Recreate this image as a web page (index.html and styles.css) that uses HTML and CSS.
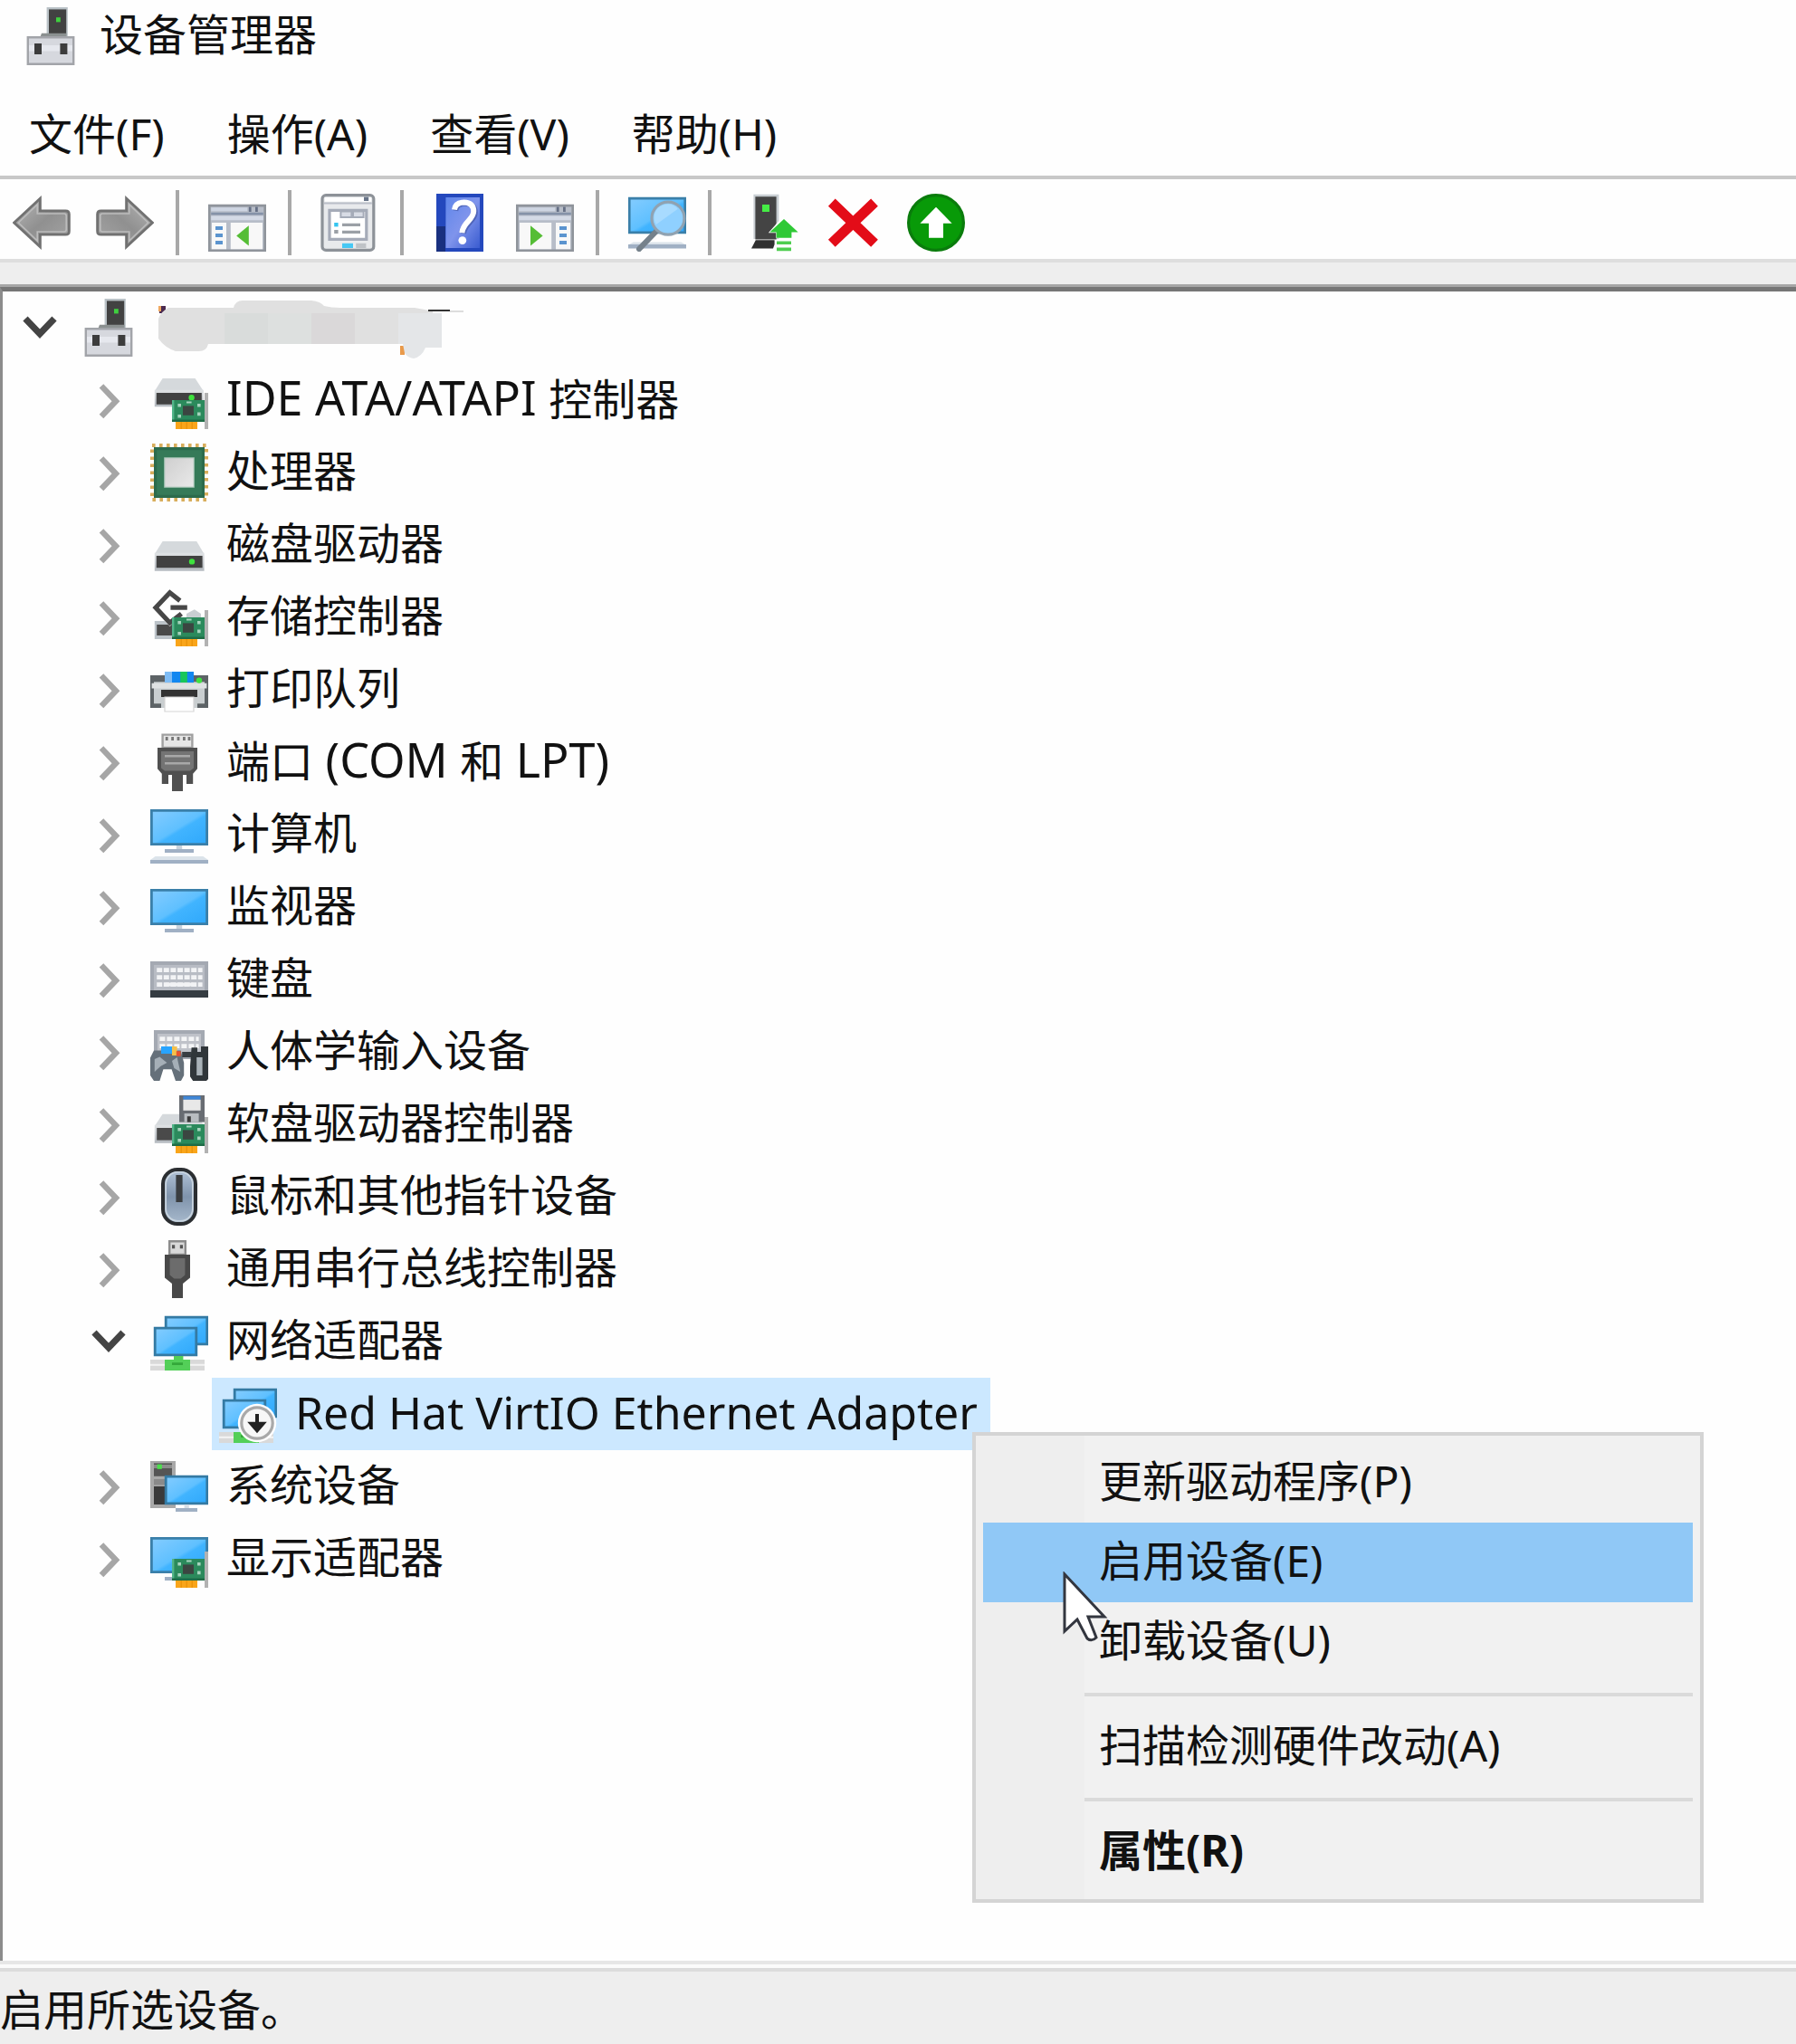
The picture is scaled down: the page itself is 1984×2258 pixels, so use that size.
FILE: index.html
```html
<!DOCTYPE html>
<html lang="zh-CN">
<head>
<meta charset="utf-8">
<title>设备管理器</title>
<link rel="stylesheet" href="styles.css">
</head>
<body>
<svg class="defs" width="0" height="0" aria-hidden="true">
  <defs>
    <linearGradient id="g-screen" x1="0" y1="0" x2="1" y2="1">
      <stop offset="0" stop-color="#84ccff"/><stop offset=".5" stop-color="#5fc0ff"/><stop offset=".56" stop-color="#41b4ff"/><stop offset="1" stop-color="#2fa8fb"/>
    </linearGradient>
    <linearGradient id="g-metal" x1="0" y1="0" x2="0" y2="1">
      <stop offset="0" stop-color="#dfe2e4"/><stop offset="1" stop-color="#b4b9bf"/>
    </linearGradient>
    <linearGradient id="g-arrow" x1="0" y1="0" x2="1" y2="1">
      <stop offset="0" stop-color="#b8b8b8"/><stop offset=".5" stop-color="#909090"/><stop offset="1" stop-color="#a6a6a6"/>
    </linearGradient>
    <linearGradient id="g-mouse" x1="0" y1="0" x2="0" y2="1">
      <stop offset="0" stop-color="#b3c4d8"/><stop offset=".5" stop-color="#7f93ab"/><stop offset="1" stop-color="#a9bbce"/>
    </linearGradient>
    <linearGradient id="g-help" x1="0" y1="0" x2="1" y2="1">
      <stop offset="0" stop-color="#5f86ea"/><stop offset=".5" stop-color="#7f94ec"/><stop offset="1" stop-color="#3a5cd0"/>
    </linearGradient>
    <linearGradient id="g-chip" x1="0" y1="0" x2="1" y2="1">
      <stop offset="0" stop-color="#cfcfcf"/><stop offset="1" stop-color="#e9e9e9"/>
    </linearGradient>

    <symbol id="i-manager" viewBox="0 0 16 16">
      <path d="M6.4 0h5.8v8H6.4z" fill="#b9c1c6"/><path d="M7 .6h4.8V8H7z" fill="#424242"/>
      <path d="M9 2.8h1.2v1.3H9z" fill="#3fd03f"/><path d="M5 7.2h6.8v1H4.6z" fill="#8b9090"/>
      <path d="M1.2 8.3h12.6v7.4H1.2z" fill="#d6d8de" stroke="#a2a4a9" stroke-width=".6"/>
      <path d="M1.5 10.5h12v1.6h-12z" fill="#e6e8ee"/>
      <path d="M3 10h2v3H3zM10.1 10h2v3h-2z" fill="#3c3c3c"/>
    </symbol>
    <symbol id="p-card" viewBox="0 0 16 16">
      <path d="M15 6h1v10h-1z" fill="#b2b2b2"/>
      <path d="M6 8h9v6H6z" fill="#2b8a5c"/><path d="M6 8h.6v6H6z" fill="#52b58a"/><path d="M6 13.4h9v.6H6z" fill="#1f6c46"/>
      <path d="M9 9.6h3v2.6H9z" fill="#3b4641"/>
      <path d="M7.6 9h.9v.9h-.9zM7.6 12h.9v.9h-.9zM13 9h.9v.9H13zM13 11.4h.9v.9H13zM10 8.4h1.4v.5H10z" fill="#a6d3bd"/>
      <path d="M7 14h6v2H7z" fill="#f9a51a"/><path d="M8.4 14h.3v2h-.3zM9.9 14h.3v2h-.3zM11.4 14h.3v2h-.3z" fill="#e89208"/>
    </symbol>
    <symbol id="p-drive" viewBox="0 0 16 16">
      <path d="M3.4 7h9.4l2 3.4H1.3z" fill="#d5d9dc"/>
      <path d="M1.2 10.2h13.7v5H1.2z" fill="url(#g-metal)"/>
      <path d="M1.7 11h12.7v3.3H1.7z" fill="#414141"/>
      <circle cx="11.5" cy="12.6" r=".8" fill="#3ee23e"/>
    </symbol>
    <symbol id="i-ide" viewBox="0 0 16 16">
      <path d="M3.4 2h9l2.2 3.4H1.3z" fill="#d5d9dc"/><path d="M1.2 5.2h13.5v4.6H1.2z" fill="url(#g-metal)"/>
      <path d="M1.7 6h12.5v3.2H1.7z" fill="#414141"/><circle cx="11.4" cy="7.3" r=".8" fill="#3ee23e"/>
      <use href="#p-card"/>
    </symbol>
    <symbol id="i-cpu" viewBox="0 0 16 16">
      <rect x=".5" y=".5" width="15" height="15" fill="none" stroke="#d8ae5c" stroke-width="1" stroke-dasharray=".9 1.1"/>
      <path d="M1 1h14v14H1z" fill="#2c6b4c"/><path d="M1.8 1.8h12.4v12.4H1.8z" fill="#357a58"/>
      <path d="M3.8 3.8h8.4v8.4H3.8z" fill="#fff" opacity=".6"/><path d="M4.1 4.1h7.8v7.8H4.1z" fill="url(#g-chip)"/>
    </symbol>
    <symbol id="i-disk" viewBox="0 0 16 16"><use href="#p-drive"/></symbol>
    <symbol id="i-storage" viewBox="0 0 16 16">
      <path d="M1.2 9h8v5H1.2z" fill="#bcc3c9"/><path d="M1.8 10h6v3h-6z" fill="#4a4a4a"/>
      <path d="M10 7l2.2-1.2L14 7v2h-4z" fill="#c9ced2"/>
      <path d="M5.4 .6L10.5 5.5 5.4 10.5.5 5.5z" fill="#fff"/>
      <path d="M8.2 3.4L5.4 1.2 1.5 5.3l3.900 4.200L8.600 7M5.600 5.300h4.600" fill="none" stroke="#474747" stroke-width="1.300"/>
      <use href="#p-card"/>
    </symbol>
    <symbol id="i-printer" viewBox="0 0 16 16">
      <path d="M0 4h16v9H0z" fill="#5d6366"/><path d="M1 5.8h14v6H1z" fill="#c9ced0"/><path d="M.4 6.2h15.2v1.4H.4z" fill="#dfe2e3"/>
      <path d="M4 3h8v3H4z" fill="#1187f0"/><path d="M4 3h2v3H4z" fill="#7ebcf5"/><path d="M8.3 3h1.9v3H8.3z" fill="#19c65a"/>
      <circle cx="13.5" cy="5.4" r=".8" fill="#3ee23e"/>
      <path d="M3 8h10v2.2H3z" fill="#333"/><path d="M3 10h10v3H3z" fill="#c9ced0"/><path d="M4 10h8v4H4z" fill="#fff" stroke="#d5d5d5" stroke-width=".3"/>
    </symbol>
    <symbol id="i-port" viewBox="0 0 16 16">
      <path d="M3.4 .4h8.2V4H3.4z" fill="#e6e6e6" stroke="#a0a0a0" stroke-width=".6"/>
      <path d="M4.2 1h.7v1h-.7zM5.8 1h.7v1h-.7zM7.4 1h.7v1h-.7zM9 1h.7v1H9zM10.4 1h.7v1h-.7z" fill="#777"/>
      <path d="M2 4h11v5.8l-1.2 1.4V14H10v-2.5H5V14H3.2v-2.8L2 9.8z" fill="#505050"/>
      <path d="M3 5h9v4.6l-1 .8H4l-1-.8z" fill="#747474"/>
      <path d="M4 6h7v.6H4zM4 8h7v.6H4z" fill="#a8a8a8"/><path d="M6 11.4h3V16H6z" fill="#505050"/>
    </symbol>
    <symbol id="i-computer" viewBox="0 0 16 16">
      <path d="M.35 1.35h15.3v9.3H.35z" fill="url(#g-screen)" stroke="#3a7fa9" stroke-width=".7"/>
      <path d="M7.2 11h1.6v1H7.2z" fill="#c8d2dc"/><path d="M4 12h8v1H4z" fill="#a0b0c4"/>
      <path d="M1.4 14h13.2l1.4 1H0z" fill="#dbe3ea"/><path d="M0 15h16v1H0z" fill="#a0b0c4"/>
    </symbol>
    <symbol id="i-monitor" viewBox="0 0 16 16">
      <path d="M.35 3.35h15.3v9.3H.35z" fill="url(#g-screen)" stroke="#3a7fa9" stroke-width=".7"/>
      <path d="M7.2 13h1.6v1H7.2z" fill="#c8d2dc"/><path d="M4 14h8v1H4z" fill="#a0b0c4"/>
    </symbol>
    <symbol id="i-keyboard" viewBox="0 0 16 16">
      <path d="M0 3h16v10H0z" fill="#a4a9b2"/><path d="M1 4h14v7H1z" fill="#b8bcc4"/>
      <path d="M1.8 5.4h12.6M1.8 7.4h12.6M1.8 9.4h12.6" stroke="#f2f3f5" stroke-width="1.2" stroke-dasharray="1.5 .4"/>
      <path d="M4.2 8.9h7.6v1H4.2z" fill="#f2f3f5"/>
      <path d="M0 11h16v2H0z" fill="#353c42"/>
    </symbol>
    <symbol id="i-hid" viewBox="0 0 16 16">
      <path d="M1 2h14v8H1z" fill="#a4a9b2"/><path d="M2 3h12v6H2z" fill="#bfc2c9"/>
      <path d="M2.6 4.4h10.8M2.6 6.4h10.8" stroke="#f4f5f6" stroke-width="1.2" stroke-dasharray="1.5 .5"/>
      <path d="M1 7.600h7.400l.9 3.400V14.500L8.500 16H7L5.900 12.800H3.600L2.600 16H1L0 14.500V9.600z" fill="#65707a"/>
      <path d="M1.200 13.500V10l1.400-.6 2 1.600-1.800 1zM6.600 12.500L6 10.500l1.400-1 .9 4z" fill="#a5afb7"/>
      <path d="M3 6.500h3v2H3z" fill="#28a4ff"/><path d="M6 6.500h1.400V9H6z" fill="#f5c04a"/><path d="M7.200 7.800h1.200v1.400H7.200z" fill="#e8532f"/>
      <path d="M8.800 8h2.600v1.500H8.800z" fill="#383e43"/>
      <path d="M11.400 6.800h1.600v1.200h1V6.500h2v9l-.5.500h-3.700l-.8-1.200V12z" fill="#30363a"/><path d="M12.800 9.500h1.600v5h-1.600z" fill="#a9b2b8"/>
    </symbol>
    <symbol id="i-floppy" viewBox="0 0 16 16">
      <path d="M3.400 5.200h9.400l2 3.200H1.300z" fill="#d5d9dc"/><path d="M1.200 8.200h9v5h-9z" fill="url(#g-metal)"/><path d="M1.800 9h6v3.400h-6z" fill="#4a4a4a"/>
      <path d="M8 0h7v7.400H8z" fill="#686c72"/><path d="M9.100 .2h4.800v1H9.100z" fill="#3f86d6"/><path d="M9.100 1.200h4.800v3H9.100z" fill="#e8e8e8"/>
      <path d="M9.400 5h4v2.400h-4z" fill="#b8bcc0"/><path d="M10.200 5.800h1v1.600h-1z" fill="#3a3a3a"/>
      <use href="#p-card"/>
    </symbol>
    <symbol id="i-mouse" viewBox="0 0 16 16">
      <rect x="3.500" y=".5" width="9" height="15" rx="4" fill="url(#g-mouse)" stroke="#2b2e31" stroke-width="1"/>
      <rect x="4.300" y="1.200" width="7.400" height="13.500" rx="3.400" fill="none" stroke="#cbd6e0" stroke-width=".4"/>
      <path d="M7.100 2h1.800v7.500H7.100z" fill="#3a3d40"/>
    </symbol>
    <symbol id="i-usb" viewBox="0 0 16 16">
      <path d="M5.300 .3h4.400V4H5.300z" fill="#d9d9d9" stroke="#8c8c8c" stroke-width=".6"/>
      <path d="M6 1.300h.8v1H6zM8.200 1.300H9v1h-.8z" fill="#555"/>
      <path d="M4 4h7v6.400L9 12v4H6v-4L4 10.400z" fill="#484848"/><path d="M5.400 5h4.200v4.600l-1.200 1H6.600l-1.200-1z" fill="#6c6c6c"/>
    </symbol>
    <symbol id="i-network" viewBox="0 0 16 16">
      <path d="M4.300 1.300h11.400v7.400H4.300z" fill="url(#g-screen)" stroke="#347aa3" stroke-width=".7"/>
      <path d="M1.300 4.300h11.400v7.400H1.300z" fill="url(#g-screen)" stroke="#347aa3" stroke-width=".7"/>
      <path d="M0 13h15v3H0z" fill="#d9d9d9"/><path d="M0 14.200h15v.5H0z" fill="#f4f4f4"/>
      <path d="M6.500 12h2.600v1H11v3H4v-3h2.500z" fill="#53cf58"/><path d="M6 13.800h3v.7H6z" fill="#34a83a"/>
    </symbol>
    <symbol id="i-disabled" viewBox="0 0 16 16">
      <use href="#i-network"/>
      <circle cx="10.500" cy="10.500" r="5.300" fill="#fff"/>
      <circle cx="10.500" cy="10.500" r="4.300" fill="#f7f7f7" stroke="#a9a9a9" stroke-width=".8"/>
      <path d="M10 8h1v2.200h2.200L10.500 13.300 7.800 10.200H10z" fill="#222"/>
    </symbol>
    <symbol id="i-system" viewBox="0 0 16 16">
      <path d="M0 1h7v13H0z" fill="#a9a9a9"/><path d="M1 1.600h5v3.600H1z" fill="#555"/><path d="M1 2h5v1H1z" fill="#8c8c8c"/>
      <path d="M1 6h5v1.600H1z" fill="#8a8a8a"/><path d="M1 8h3.500v5H1z" fill="#3a3a3a"/><path d="M1.900 1.900h1.300v1.300H1.900z" fill="#4be04b"/>
      <path d="M4.300 5.300h11.400v7.400H4.300z" fill="url(#g-screen)" stroke="#347aa3" stroke-width=".7"/>
      <path d="M9.400 13h1.300v1H9.400z" fill="#d5dde5"/><path d="M7 14h6v1H7z" fill="#a0b0c4"/>
    </symbol>
    <symbol id="i-display" viewBox="0 0 16 16">
      <path d="M.35 2.350h15.300v9.300H.35z" fill="url(#g-screen)" stroke="#3a7fa9" stroke-width=".7"/>
      <path d="M4 13h3v1H4z" fill="#a0b0c4"/><use href="#p-card"/>
    </symbol>

    <symbol id="t-back" viewBox="0 0 16 16">
      <path d="M.4 8L7.600 1.300v3.400h7q1 0 1 1v4.600q0 1-1 1h-7v3.400z" fill="url(#g-arrow)" stroke="#717171" stroke-width=".7"/>
      <path d="M1.600 8L6.800 3v2.500h7.400q.6 0 .6.600v3.800q0 .6-.6.600H6.800V13z" fill="none" stroke="#bcbcbc" stroke-width=".4"/>
    </symbol>
    <symbol id="t-panel" viewBox="0 0 16 16">
      <path d="M.3 3.300h15.400v12.400H.3z" fill="#b7bdc8" stroke="#8f949b" stroke-width=".7"/>
      <path d="M.8 3.800h10v1h-10z" fill="#ced5e2"/><path d="M11.200 3.600h.7v1.400h-.7zM13 3.600h.7v1.400H13z" fill="#667086"/>
      <path d="M.8 5.200h14.400v.7H.8z" fill="#8592a8"/><path d="M.8 6.100h14.400v1.200H.8z" fill="#d4dae6"/>
      <path d="M1 8h4v7.300H1zM6.200 8H15v7.300H6.200z" fill="#f8f8f8"/>
      <path d="M2 9h2v1H2zM2 11h2v1H2zM2 13h2v1H2z" fill="#5b94cf"/>
      <path d="M11.200 8.800v5.600L7.800 11.600z" fill="#55bd35"/>
    </symbol>
    <symbol id="t-panel-right" viewBox="0 0 16 16">
      <path d="M.3 3.300h15.400v12.400H.3z" fill="#b7bdc8" stroke="#8f949b" stroke-width=".7"/>
      <path d="M.8 3.800h10v1h-10z" fill="#ced5e2"/><path d="M11.200 3.600h.7v1.400h-.7zM13 3.600h.7v1.400H13z" fill="#667086"/>
      <path d="M.8 5.200h14.400v.7H.8z" fill="#8592a8"/><path d="M.8 6.100h14.400v1.200H.8z" fill="#d4dae6"/>
      <path d="M1 8h8.800v7.300H1zM11 8h4v7.300h-4z" fill="#f8f8f8"/>
      <path d="M12 9h2v1h-2zM12 11h2v1h-2zM12 13h2v1h-2z" fill="#5b94cf"/>
      <path d="M4 8.800v5.600l3.400-2.800z" fill="#55bd35"/>
    </symbol>
    <symbol id="t-props" viewBox="0 0 16 16">
      <rect x=".5" y=".4" width="14.200" height="15.200" rx="1" fill="#e8eaec" stroke="#8d9298" stroke-width=".8"/>
      <path d="M1.200 1H14v1.200H1.200z" fill="#fff"/><path d="M12 .9h1.300v1.100H12z" fill="#687488"/><path d="M1 2.400h13.200v.5H1z" fill="#b9bec7"/>
      <path d="M2.500 4.600h10.200v8H2.500z" fill="#fff" stroke="#a5abb8" stroke-width=".8"/>
      <path d="M5.600 4.900h3v1.600h-3zM9 4.900h2.900v1.600H9z" fill="#d8dce5" stroke="#a5abb8" stroke-width=".5"/>
      <path d="M3.800 8h1.100v1.100H3.800z" fill="#35c5f0"/><path d="M3.800 10h1.100v1H3.800zM6 8.200h5v.8H6zM6 10.200h5v.8H6z" fill="#9ba0a6"/>
      <path d="M6 13.700h3V15H6z" fill="#46c8f4"/><path d="M9.800 13.700h2.800V15H9.800z" fill="#bfc3c7"/>
    </symbol>
    <symbol id="t-help" viewBox="0 0 16 16">
      <path d="M1 0h13v16H1z" fill="#2448bd"/><path d="M1 9h2.500v7H1z" fill="#19307f"/><path d="M3.600 1H13v14H3.600z" fill="url(#g-help)"/>
      <path d="M6.300 4.700Q6.600 2.700 8.900 2.700 11.700 2.800 11.700 5.200C11.700 7.500 8.700 8.200 8.500 11" fill="none" stroke="#33458f" stroke-width="1.500" opacity=".5"/>
      <path d="M6 4.400Q6.300 2.400 8.600 2.400 11.300 2.500 11.300 4.900C11.300 7.200 8.300 7.900 8.100 10.800" fill="none" stroke="#fff" stroke-width="1.500"/>
      <circle cx="8.200" cy="12.900" r="1.100" fill="#fff"/>
    </symbol>
    <symbol id="t-scan" viewBox="0 0 16 16">
      <path d="M.3 1.300h15.400v9.400H.3z" fill="url(#g-screen)" stroke="#3a7fa9" stroke-width=".7"/>
      <path d="M1.400 13.400h13.200l1.400.7H0z" fill="#dbe3ea"/><path d="M0 14h16v1.100H0z" fill="#a0b0c4"/>
      <path d="M7.700 10.400L3 15.300" stroke="#75818b" stroke-width="1.500" stroke-linecap="round"/>
      <circle cx="11" cy="6.800" r="4.500" fill="#8fd0ff" stroke="#90a2b1" stroke-width=".8"/>
      <path d="M7.700 8.500a3.700 3.700 0 0 1 6-4.300z" fill="#a8dbff"/>
    </symbol>
    <symbol id="t-update" viewBox="0 0 16 16">
      <path d="M3.600 .2h7v12.300h-7z" fill="#c8ced2"/><path d="M4.100 .8h5.800v11.800H4.100z" fill="#444"/><path d="M6 3h2v2H6z" fill="#45ed45"/>
      <path d="M4.200 12.800h5.200v1.200l-.4 1.100H3l.6-1.100z" fill="#303030"/>
      <path d="M11.800 6.200l4.200 4.600h-2v1.400h-4.200v-1.400H7.700z" fill="#fff"/>
      <path d="M12 7l3.900 3.600h-1.800v1.600h-4.200v-1.600H8.100z" fill="#2fc936"/><path d="M10 13.100h4v.9h-4zM10 14.900h4v.9h-4z" fill="#4fce50"/>
    </symbol>
    <symbol id="t-remove" viewBox="0 0 16 16">
      <path d="M2.200 2.400L14 13.700M14 2.400L2.200 13.700" stroke="#e30c18" stroke-width="2.800"/>
    </symbol>
    <symbol id="t-enable" viewBox="0 0 16 16">
      <circle cx="8" cy="8" r="7.600" fill="#089a08" stroke="#0a7c0c" stroke-width=".8"/>
      <path d="M8 3.700l4.400 4.500H10v4H6v-4H3.600z" fill="#fff"/>
    </symbol>

    <symbol id="c-right" viewBox="0 0 16 16"><path d="M6 4.100l4 4.200-4 4.200" fill="none" stroke="#a6a6a6" stroke-width="1.600"/></symbol>
    <symbol id="c-down" viewBox="0 0 16 16"><path d="M4 5.500l4 4.200 4-4.200" fill="none" stroke="#444" stroke-width="1.800"/></symbol>
  </defs>
</svg>

<header class="titlebar">
  <svg class="icon"><use href="#i-manager"/></svg>
  <h1 class="title">设备管理器</h1>
</header>

<nav class="menubar">
  <button type="button">文件(F)</button>
  <button type="button">操作(A)</button>
  <button type="button">查看(V)</button>
  <button type="button">帮助(H)</button>
</nav>

<div class="toolbar" role="toolbar">
  <button type="button" aria-label="后退"><svg class="icon"><use href="#t-back"/></svg></button>
  <button type="button" aria-label="前进"><svg class="icon flip"><use href="#t-back"/></svg></button>
  <span class="divider"></span>
  <button type="button" aria-label="显示控制台树"><svg class="icon"><use href="#t-panel"/></svg></button>
  <span class="divider"></span>
  <button type="button" aria-label="属性"><svg class="icon"><use href="#t-props"/></svg></button>
  <span class="divider"></span>
  <button type="button" aria-label="帮助"><svg class="icon"><use href="#t-help"/></svg></button>
  <button type="button" aria-label="显示操作窗格"><svg class="icon"><use href="#t-panel-right"/></svg></button>
  <span class="divider"></span>
  <button type="button" aria-label="扫描硬件改动"><svg class="icon"><use href="#t-scan"/></svg></button>
  <span class="divider"></span>
  <button type="button" aria-label="更新驱动程序"><svg class="icon"><use href="#t-update"/></svg></button>
  <button type="button" aria-label="卸载设备"><svg class="icon"><use href="#t-remove"/></svg></button>
  <button type="button" aria-label="启用设备"><svg class="icon"><use href="#t-enable"/></svg></button>
</div>
<div class="band"></div>

<main class="tree">
  <ul>
    <li>
      <div class="row">
        <button class="toggle" type="button" aria-label="折叠"><svg class="icon"><use href="#c-down"/></svg></button>
        <div class="item">
          <svg class="icon"><use href="#i-manager"/></svg>
          <svg class="redacted" viewBox="0 4 344 80" aria-hidden="true">
            <path d="M2 20h7v8H2zM1 38h3v18H1z" fill="#4a2a50"/><path d="M1 20h3v6H1zM1 38h2v18H1z" fill="#f0a860"/>
            <path d="M54 60h14v2H54z" fill="#333"/><path d="M68 60h6v2h-6z" fill="#f0a860"/>
            <path d="M268 64h5v10h-5z" fill="#e99a4b"/>
            <path d="M12 22H84q2-8 10-8h76q10 1 14 6 8 2 18 2h82q12 2 20 4v36H56q-2 8-10 8H20Q8 66 1 56V34Q4 26 12 22z" fill="#e0e0e0"/>
            <path d="M74 28h48v34H74z" fill="#d9dcdb"/><path d="M122 28h48v34h-48z" fill="#dde0df"/><path d="M170 28h48v34h-48z" fill="#dad8d9"/>
            <path d="M266 28h48v38h-18q-4 10-13 12-7-1-10-6l-2-10h-5z" fill="#e4e6e8"/>
            <path d="M299 24h24v2h-24z" fill="#333"/><path d="M323 25h15v2h-15z" fill="#ddd"/>
          </svg>
        </div>
      </div>
      <ul class="branch">
        <li><div class="row"><button class="toggle" type="button" aria-label="展开"><svg class="icon"><use href="#c-right"/></svg></button><div class="item"><svg class="icon"><use href="#i-ide"/></svg><span class="label"><span class="caps">IDE ATA/ATAPI </span>控制器</span></div></div></li>
        <li><div class="row"><button class="toggle" type="button" aria-label="展开"><svg class="icon"><use href="#c-right"/></svg></button><div class="item"><svg class="icon"><use href="#i-cpu"/></svg><span class="label">处理器</span></div></div></li>
        <li><div class="row"><button class="toggle" type="button" aria-label="展开"><svg class="icon"><use href="#c-right"/></svg></button><div class="item"><svg class="icon"><use href="#i-disk"/></svg><span class="label">磁盘驱动器</span></div></div></li>
        <li><div class="row"><button class="toggle" type="button" aria-label="展开"><svg class="icon"><use href="#c-right"/></svg></button><div class="item"><svg class="icon"><use href="#i-storage"/></svg><span class="label">存储控制器</span></div></div></li>
        <li><div class="row"><button class="toggle" type="button" aria-label="展开"><svg class="icon"><use href="#c-right"/></svg></button><div class="item"><svg class="icon"><use href="#i-printer"/></svg><span class="label">打印队列</span></div></div></li>
        <li><div class="row"><button class="toggle" type="button" aria-label="展开"><svg class="icon"><use href="#c-right"/></svg></button><div class="item"><svg class="icon"><use href="#i-port"/></svg><span class="label">端口<span class="caps"> (COM </span>和<span class="caps"> LPT)</span></span></div></div></li>
        <li><div class="row"><button class="toggle" type="button" aria-label="展开"><svg class="icon"><use href="#c-right"/></svg></button><div class="item"><svg class="icon"><use href="#i-computer"/></svg><span class="label">计算机</span></div></div></li>
        <li><div class="row"><button class="toggle" type="button" aria-label="展开"><svg class="icon"><use href="#c-right"/></svg></button><div class="item"><svg class="icon"><use href="#i-monitor"/></svg><span class="label">监视器</span></div></div></li>
        <li><div class="row"><button class="toggle" type="button" aria-label="展开"><svg class="icon"><use href="#c-right"/></svg></button><div class="item"><svg class="icon"><use href="#i-keyboard"/></svg><span class="label">键盘</span></div></div></li>
        <li><div class="row"><button class="toggle" type="button" aria-label="展开"><svg class="icon"><use href="#c-right"/></svg></button><div class="item"><svg class="icon"><use href="#i-hid"/></svg><span class="label">人体学输入设备</span></div></div></li>
        <li><div class="row"><button class="toggle" type="button" aria-label="展开"><svg class="icon"><use href="#c-right"/></svg></button><div class="item"><svg class="icon"><use href="#i-floppy"/></svg><span class="label">软盘驱动器控制器</span></div></div></li>
        <li><div class="row"><button class="toggle" type="button" aria-label="展开"><svg class="icon"><use href="#c-right"/></svg></button><div class="item"><svg class="icon"><use href="#i-mouse"/></svg><span class="label">鼠标和其他指针设备</span></div></div></li>
        <li><div class="row"><button class="toggle" type="button" aria-label="展开"><svg class="icon"><use href="#c-right"/></svg></button><div class="item"><svg class="icon"><use href="#i-usb"/></svg><span class="label">通用串行总线控制器</span></div></div></li>
        <li>
          <div class="row"><button class="toggle" type="button" aria-label="折叠"><svg class="icon"><use href="#c-down"/></svg></button><div class="item"><svg class="icon"><use href="#i-network"/></svg><span class="label">网络适配器</span></div></div>
          <ul class="branch">
            <li><div class="row leaf"><div class="item selected"><svg class="icon"><use href="#i-disabled"/></svg><span class="label latin">Red Hat VirtIO Ethernet Adapter</span></div></div></li>
          </ul>
        </li>
        <li><div class="row"><button class="toggle" type="button" aria-label="展开"><svg class="icon"><use href="#c-right"/></svg></button><div class="item"><svg class="icon"><use href="#i-system"/></svg><span class="label">系统设备</span></div></div></li>
        <li><div class="row"><button class="toggle" type="button" aria-label="展开"><svg class="icon"><use href="#c-right"/></svg></button><div class="item"><svg class="icon"><use href="#i-display"/></svg><span class="label">显示适配器</span></div></div></li>
      </ul>
    </li>
  </ul>

  <div class="context-menu" role="menu">
    <button type="button" role="menuitem">更新驱动程序(P)</button>
    <button type="button" role="menuitem" class="active">启用设备(E)</button>
    <button type="button" role="menuitem">卸载设备(U)</button>
    <hr>
    <button type="button" role="menuitem">扫描检测硬件改动(A)</button>
    <hr>
    <button type="button" role="menuitem" class="default">属性(R)</button>
    <svg class="cursor" viewBox="0 0 52 80" aria-hidden="true">
      <path d="M2 3V66L16 53 27 74Q32 78 37 73L28 50H46z" fill="#fff" stroke="#33363f" stroke-width="3"/>
    </svg>
  </div>
</main>

<footer class="statusbar">启用所选设备。</footer>
</body>
</html>
```
FILE: styles.css
```css
* {
  box-sizing: border-box;
}

body {
  margin: 0;
  min-height: 100vh;
  display: flex;
  flex-direction: column;
  background: #fefefe;
  color: #111;
  font-family: "Noto Sans", "Noto Sans CJK SC", sans-serif;
  font-size: 48px;
  line-height: 64px;
}

button {
  margin: 0;
  padding: 0;
  border: 0;
  background: none;
  color: inherit;
  font: inherit;
}

ul {
  margin: 0;
  padding: 0;
  list-style: none;
}

.defs {
  position: absolute;
}

.icon {
  display: block;
  flex: none;
  width: 64px;
  height: 64px;
}

.flip {
  transform: scaleX(-1);
}

.titlebar {
  display: flex;
  align-items: center;
  gap: 20px;
  height: 80px;
  padding-left: 26px;
}

.title {
  margin: 0;
  padding-bottom: 4px;
  font-size: 48px;
  font-weight: 400;
}

.menubar {
  display: flex;
  align-items: center;
  gap: 69px;
  height: 118px;
  padding: 22px 32px 0;
  border-bottom: 4px solid #c8c8c8;
}

.toolbar {
  display: flex;
  align-items: center;
  gap: 28px;
  height: 92px;
  padding: 8px 14px 0;
  border-bottom: 4px solid #dedede;
}

.divider {
  width: 4px;
  height: 72px;
  margin: 0 4px 0 -4px;
  background: #a8a8a8;
}

.band {
  height: 27px;
  background: #eee;
  border-bottom: 3px solid #a6a6a6;
}

.tree {
  position: relative;
  flex: 1;
  border-top: 5px solid #767676;
  border-left: 3px solid #8c8c8c;
}

.row {
  display: flex;
  align-items: center;
  height: 80px;
  padding-left: 9px;
}

.branch {
  padding-left: 76px;
}

.toggle {
  width: 64px;
  margin-right: 6px;
}

.item {
  display: flex;
  align-items: center;
  gap: 20px;
  height: 80px;
  padding: 0 14px 0 8px;
}

.leaf {
  padding-left: 79px;
}

.label {
  padding-bottom: 4px;
  white-space: pre;
}

.latin {
  font-size: 50px;
}

.caps {
  font-size: 52px;
}

.selected {
  background: #cce8ff;
}

.redacted {
  width: 344px;
  height: 80px;
}

.context-menu {
  position: absolute;
  top: 1260px;
  left: 1071px;
  width: 808px;
  padding: 8px;
  border: 4px solid #d4d4d4;
  background: linear-gradient(90deg, #eee 120px, #f1f1f1 120px);
}

.context-menu button {
  display: block;
  width: 100%;
  height: 88px;
  padding: 0 0 4px 128px;
  text-align: left;
}

.context-menu .active {
  background: #90c8f6;
}

.context-menu .default {
  font-weight: 700;
}

.context-menu hr {
  height: 4px;
  margin: 12px 0 12px 112px;
  border: 0;
  background: #dadada;
}

.cursor {
  position: absolute;
  top: 150px;
  left: 96px;
  width: 52px;
  height: 80px;
}

.statusbar {
  height: 92px;
  padding: 10px 0 0;
  border-top: 4px solid #e6e6e6;
  background: linear-gradient(#fbfbfb 4px, #dcdcdc 4px, #dcdcdc 8px, #eee 8px);
  line-height: 80px;
}
```
